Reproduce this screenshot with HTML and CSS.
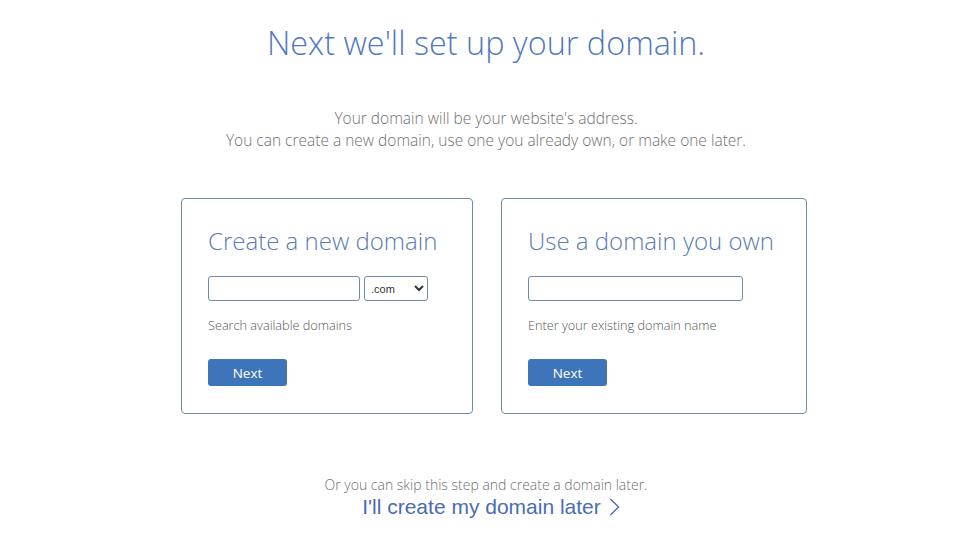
FILE: index.html
```html
<!DOCTYPE html>
<html>
<head>
<meta charset="utf-8">
<link rel="stylesheet" href="styles.css">
</head>
<body>
<div class="page">
  <h1 class="title">Next we'll set up your domain.</h1>
  <p class="intro">Your domain will be your website's address.<br>You can create a new domain, use one you already own, or make one later.</p>
  <div class="cards">
    <div class="card card-new">
      <h2 class="card-title">Create a new domain</h2>
      <div class="field-row">
        <input class="text-input input-new" type="text">
        <select class="tld">
          <option>.com</option>
        </select>
      </div>
      <p class="help">Search available domains</p>
      <button class="btn">Next</button>
    </div>
    <div class="card card-own">
      <h2 class="card-title">Use a domain you own</h2>
      <div class="field-row">
        <input class="text-input input-own" type="text">
      </div>
      <p class="help">Enter your existing domain name</p>
      <button class="btn">Next</button>
    </div>
  </div>
  <p class="skip">Or you can skip this step and create a domain later.</p>
  <a class="later" href="#">I'll create my domain later <svg class="chev" width="11" height="18" viewBox="0 0 11 18"><path d="M1.5 1 L9.5 9 L1.5 17" fill="none" stroke="#4a6cb3" stroke-width="1.4"/></svg></a>
</div>
</body>
</html>
```
FILE: styles.css
```css
html, body {
  margin: 0;
  padding: 0;
  background: #fff;
}
.page {
  width: 956px;
  box-sizing: border-box;
  padding-left: 16px;
  display: flex;
  flex-direction: column;
  align-items: center;
  font-family: "Open Sans", "DejaVu Sans", sans-serif;
}
.title {
  margin: 20px 0 0;
  font-size: 32.4px;
  line-height: 44px;
  font-weight: 300;
  color: #5479bd;
  text-align: center;
}
.intro {
  margin: 43px 0 0;
  font-size: 15.5px;
  line-height: 22px;
  font-weight: 300;
  color: #6f6f6f;
  text-align: center;
}
.cards {
  margin: 47px 0 0 16px;
  display: flex;
  gap: 28px;
}
.card {
  box-sizing: border-box;
  height: 216px;
  border: 1px solid #6f8ca9;
  border-radius: 4px;
  padding: 26px 26px 0 26px;
}
.card-new { width: 292px; }
.card-own { width: 306px; }
.card-title {
  margin: 0;
  font-size: 24px;
  line-height: 32px;
  font-weight: 300;
  color: #5a7cb5;
  white-space: nowrap;
}
.field-row {
  margin-top: 19px;
  display: flex;
  gap: 4px;
  height: 25px;
}
.text-input {
  box-sizing: border-box;
  height: 25px;
  border: 1px solid #6f8ca9;
  border-radius: 3px;
  padding: 0 6px;
  margin: 0;
  outline: none;
  background: #fff;
}
.input-new { width: 152px; }
.input-own { width: 215px; }
.tld {
  box-sizing: border-box;
  width: 64px;
  height: 25px;
  border: 1px solid #6f8ca9;
  border-radius: 3px;
  margin: 0;
  padding: 0 2px;
  font-family: "Liberation Sans", Arial, sans-serif;
  font-size: 11px;
  color: #333;
  background: #fff;
}
.help {
  margin: 15px 0 0;
  font-size: 12.7px;
  line-height: 18px;
  font-weight: 300;
  color: #555;
}
.btn {
  margin-top: 25px;
  width: 79px;
  height: 27px;
  border: none;
  border-radius: 3px;
  background: #3e74ba;
  color: #fff;
  font-family: "Open Sans", sans-serif;
  font-size: 13.5px;
  padding: 0;
  display: block;
}
.skip {
  margin: 61px 0 0;
  font-size: 14px;
  line-height: 20px;
  font-weight: 300;
  color: #6f6f6f;
}
.later {
  margin-left: 10px;
  font-family: "Liberation Sans", Arial, sans-serif;
  font-size: 21px;
  line-height: 24px;
  color: #4a6cb3;
  text-decoration: none;
  display: flex;
  align-items: center;
  gap: 8px;
}
.chev { display: block; }
```
